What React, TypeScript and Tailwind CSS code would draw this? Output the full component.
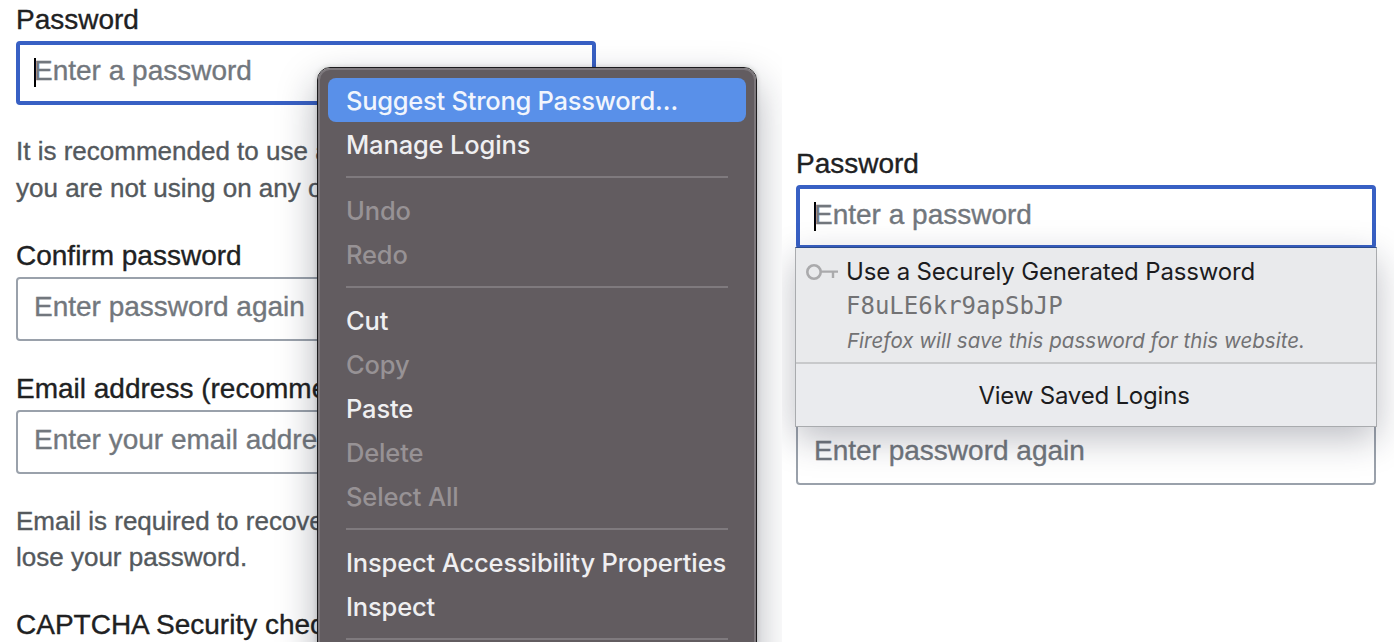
import type { ReactNode } from "react";

const sans = "font-['Liberation_Sans',Arial,sans-serif]";
const inter = "font-['Inter',sans-serif]";

function Label({ children }: { children: ReactNode }) {
  return (
    <div className="h-[36px] pt-px text-[28px] leading-[36px] whitespace-nowrap text-[#202122] [-webkit-text-stroke:0.35px]">
      {children}
    </div>
  );
}

function Field({ placeholder, focused = false }: { placeholder: string; focused?: boolean }) {
  return (
    <div
      className={
        focused
          ? "mt-[4px] flex h-[64px] w-[580px] items-start rounded-[4px] border-4 border-[#3860c4] bg-white pt-[8px] pl-[14px]"
          : "mt-[4px] flex h-[64px] w-[580px] items-start rounded-[4px] border-2 border-[#9aa1ab] bg-white pt-[10px] pl-[16px]"
      }
    >
      {focused && <span className="mt-[5px] -mr-[2px] h-[29px] w-[2px] shrink-0 bg-black" />}
      <span className="text-[28px] leading-[36px] whitespace-nowrap text-[#72777d] [-webkit-text-stroke:0.35px]">{placeholder}</span>
    </div>
  );
}

function Help({ children }: { children: ReactNode }) {
  return <p className="text-[26px] whitespace-nowrap text-[#54595d] [-webkit-text-stroke:0.35px]">{children}</p>;
}

function Item({ children, state = "normal" }: { children: ReactNode; state?: "normal" | "active" | "disabled" }) {
  const look =
    state === "active"
      ? "rounded-[8px] bg-[#5990e9] text-[#f1f5fd] tracking-[-0.26px]"
      : state === "disabled"
        ? "text-[#979295] tracking-[-0.15px]"
        : "text-[#efeff1] tracking-[-0.15px]";
  return (
    <div className={`flex h-[44px] items-center pt-[2px] pl-[18px] text-[25.5px] leading-[42px] font-[450] whitespace-nowrap ${look}`}>
      {children}
    </div>
  );
}

function Separator() {
  return (
    <div className="flex h-[22px] items-center px-[18px]">
      <div className="h-[2px] w-full bg-[#7f7a7e]" />
    </div>
  );
}

function ContextMenu() {
  return (
    <div className="absolute top-[67px] left-[317px] w-[440px] rounded-[13px] border border-[#1d1c1e] shadow-[0_16px_38px_rgba(20,25,45,0.34),0_0_5px_rgba(0,0,0,0.18)]">
      <div className={`rounded-[12px] border-2 border-[#7d787c] bg-[#625c60] px-[8px] pt-[8px] pb-[60px] ${inter}`}>
        <Item state="active">Suggest Strong Password…</Item>
        <Item>Manage Logins</Item>
        <Separator />
        <Item state="disabled">Undo</Item>
        <Item state="disabled">Redo</Item>
        <Separator />
        <Item>Cut</Item>
        <Item state="disabled">Copy</Item>
        <Item>Paste</Item>
        <Item state="disabled">Delete</Item>
        <Item state="disabled">Select All</Item>
        <Separator />
        <Item>Inspect Accessibility Properties</Item>
        <Item>Inspect</Item>
        <Separator />
      </div>
    </div>
  );
}

function KeyIcon() {
  return (
    <svg className="mt-[16px] h-[16px] w-[32px] shrink-0" viewBox="0 0 32 16" fill="none" stroke="#aaaaac" strokeWidth="2.6">
      <circle cx="8" cy="8" r="6.7" />
      <path d="M14.7 7.6H32M27 7.6V14" strokeWidth="2.4" />
    </svg>
  );
}

function LoginPopup() {
  return (
    <div className={`absolute top-[247px] left-[13px] w-[582px] border border-[#a9abae] border-t-[#2a4b8d] bg-[#e9eaec] shadow-[0_12px_34px_rgba(20,25,45,0.28)] ${inter}`}>
      <div className="flex h-[114px] pl-[10px]">
        <KeyIcon />
        <div className="pl-[8px] whitespace-nowrap">
          <div className="mt-[7px] h-[34px] text-[24px] leading-[34px] tracking-[-0.16px] text-[#1c1c1e]">Use a Securely Generated Password</div>
          <div className="h-[34px] font-['DejaVu_Sans_Mono',monospace] text-[24px] leading-[34px] text-[#727274]">F8uLE6kr9apSbJP</div>
          <div className="h-[34px] pt-px pl-px text-[20.5px] leading-[34px] tracking-[0.02px] text-[#727274] italic">Firefox will save this password for this website.</div>
        </div>
      </div>
      <div className="flex h-[64px] items-center justify-center border-t-2 border-[#c8c9cb] bg-[#eaebee] pt-[2px] pr-[4px] text-[24px] tracking-[-0.2px] whitespace-nowrap text-[#1c1c1e]">
        View Saved Logins
      </div>
    </div>
  );
}

export default function App() {
  return (
    <div className={`flex h-[642px] w-[1394px] overflow-hidden bg-white ${sans}`}>
      <section className="relative h-[642px] w-[782px] shrink-0 overflow-hidden pt-px pl-[16px]">
        <Label>Password</Label>
        <Field placeholder="Enter a password" focused />
        <div className="mt-[28px] mb-[31px] leading-[36.5px]">
          <Help>It is recommended to use a unique password that</Help>
          <Help>you are not using on any other website.</Help>
        </div>
        <Label>Confirm password</Label>
        <Field placeholder="Enter password again" />
        <div className="h-[29px]" />
        <Label>Email address (recommended)</Label>
        <Field placeholder="Enter your email address" />
        <div className="mt-[29px] mb-[31px] leading-[36px]">
          <Help>Email is required to recover your account if you</Help>
          <Help>lose your password.</Help>
        </div>
        <Label>CAPTCHA Security check</Label>
        <ContextMenu />
      </section>
      <section className="relative h-[642px] w-[612px] shrink-0 overflow-hidden pt-[145px] pl-[14px]">
        <Label>Password</Label>
        <Field placeholder="Enter a password" focused />
        <div className="h-[132px]" />
        <Label>Confirm password</Label>
        <Field placeholder="Enter password again" />
        <LoginPopup />
      </section>
    </div>
  );
}
